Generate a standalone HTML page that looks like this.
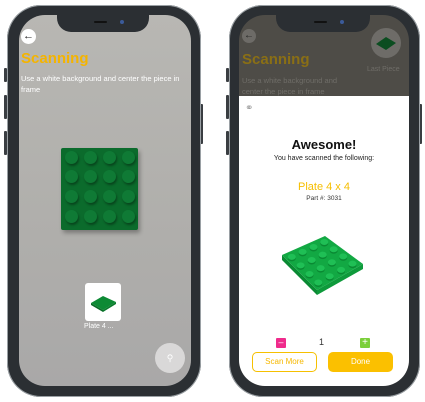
<!DOCTYPE html>
<html><head><style>
*{margin:0;padding:0;box-sizing:border-box}
body{width:425px;height:402px;background:#fff;position:relative;overflow:hidden;font-family:"Liberation Sans",sans-serif}
.ph{position:absolute;background:#2b2f33;border-radius:34px;box-shadow:0 0 0 1px #9aa0a4 inset}
.scr{position:absolute;border-radius:26px;overflow:hidden}
.notch{position:absolute;background:#2b2f33;border-radius:0 0 14px 14px}
.btn{position:absolute;background:#3a3e42;width:3px;border-radius:1px}
.stud{position:absolute;width:13px;height:13px;border-radius:50%;background:#0f7a35;box-shadow:1px 2px 2px rgba(0,0,0,.35)}
.a{position:absolute}
</style></head><body>
<!-- left phone -->
<div class="btn" style="left:4px;top:68px;height:14px"></div>
<div class="btn" style="left:4px;top:95px;height:24px"></div>
<div class="btn" style="left:4px;top:131px;height:24px"></div>
<div class="btn" style="left:200px;top:104px;height:40px"></div>
<div class="ph" style="left:7px;top:5px;width:194px;height:392px"></div>
<div class="scr" style="left:19px;top:15px;width:172px;height:371px;background:linear-gradient(#b8b7b3,#afaeab 60%,#a9a8a8)">
  <div class="a" style="left:2px;top:14px;width:15px;height:15px;border-radius:50%;background:#fff;font-size:11px;line-height:15px;text-align:center;color:#222">&#8592;</div>
  <div class="a" style="left:2px;top:35px;font-size:15px;font-weight:bold;color:#f4b400">Scanning</div>
  <div class="a" style="left:2px;top:58px;width:160px;font-size:7.5px;line-height:11px;color:#fff">Use a white background and center the piece in frame</div>
  <div class="a" style="left:42px;top:133px;width:77px;height:82px;background:#0b6b2c;border-radius:2px;box-shadow:2px 3px 4px rgba(0,0,0,.3)">
    <div class="stud" style="left:4px;top:3px"></div><div class="stud" style="left:23px;top:3px"></div><div class="stud" style="left:42px;top:3px"></div><div class="stud" style="left:61px;top:3px"></div>
    <div class="stud" style="left:4px;top:22px"></div><div class="stud" style="left:23px;top:22px"></div><div class="stud" style="left:42px;top:22px"></div><div class="stud" style="left:61px;top:22px"></div>
    <div class="stud" style="left:4px;top:42px"></div><div class="stud" style="left:23px;top:42px"></div><div class="stud" style="left:42px;top:42px"></div><div class="stud" style="left:61px;top:42px"></div>
    <div class="stud" style="left:4px;top:62px"></div><div class="stud" style="left:23px;top:62px"></div><div class="stud" style="left:42px;top:62px"></div><div class="stud" style="left:61px;top:62px"></div>
  </div>
  <div class="a" style="left:66px;top:268px;width:36px;height:38px;background:#fff;border-radius:3px">
    <svg width="36" height="38"><polygon points="6,20 18,13 31,19 18,27" fill="#0d8a34"/><polygon points="6,20 18,27 18,29 6,22" fill="#096b26"/><polygon points="18,27 31,19 31,21 18,29" fill="#0a7a2c"/></svg>
  </div>
  <div class="a" style="left:65px;top:308px;font-size:7px;color:#fff">Plate 4 ...</div>
  <div class="a" style="left:136px;top:328px;width:30px;height:30px;border-radius:50%;background:#d9d8d8;color:#fff;font-size:9px;text-align:center;line-height:30px">&#9906;</div>
</div>
<div class="notch" style="left:57px;top:15px;width:92px;height:17px"></div>
<div class="a" style="left:94px;top:21px;width:13px;height:2px;background:#111;border-radius:1px"></div>
<div class="a" style="left:120px;top:20px;width:4px;height:4px;background:#3b5b9a;border-radius:50%"></div>

<!-- right phone -->
<div class="btn" style="left:226px;top:68px;height:14px"></div>
<div class="btn" style="left:226px;top:95px;height:24px"></div>
<div class="btn" style="left:226px;top:131px;height:24px"></div>
<div class="btn" style="left:419px;top:104px;height:40px"></div>
<div class="ph" style="left:229px;top:5px;width:191px;height:392px"></div>
<div class="scr" style="left:239px;top:15px;width:170px;height:371px;background:#4e4c47">
  <div class="a" style="left:3px;top:14px;width:14px;height:14px;border-radius:50%;background:#6d6b67;font-size:10px;line-height:14px;text-align:center;color:#222">&#8592;</div>
  <div class="a" style="left:3px;top:36px;font-size:15px;font-weight:bold;color:#8a6f15">Scanning</div>
  <div class="a" style="left:3px;top:60px;width:110px;font-size:7.5px;line-height:11px;color:#6f6d68">Use a white background and center the piece in frame</div>
  <div class="a" style="left:132px;top:13px;width:30px;height:30px;border-radius:50%;background:#6e6c68">
    <svg width="30" height="30"><polygon points="5,16 15,9 25,15 15,22" fill="#0b4d20"/></svg>
  </div>
  <div class="a" style="left:128px;top:51px;font-size:7px;color:#6f6d68">Last Piece</div>
  <div class="a" style="left:0;top:81px;width:170px;height:300px;background:#fff">
    <div class="a" style="left:6px;top:7px;font-size:10px;color:#999">&#9901;</div>
    <div class="a" style="left:0;top:41px;width:170px;text-align:center;font-size:13px;font-weight:bold;color:#111">Awesome!</div>
    <div class="a" style="left:0;top:59px;width:170px;text-align:center;font-size:7px;color:#222">You have scanned the following:</div>
    <div class="a" style="left:0;top:85px;width:170px;text-align:center;font-size:11px;color:#f6be00">Plate 4 x 4</div>
    <div class="a" style="left:0;top:99px;width:170px;text-align:center;font-size:6.5px;color:#333">Part #: 3031</div>
    <svg class="a" style="left:35px;top:135px" width="95" height="68">
      <polygon points="8,24 43,59 43,64 8,29" fill="#0a8a33"/>
      <polygon points="43,59 89,33 89,38 43,64" fill="#0e9a3b"/>
      <polygon points="8,24 51,5 89,33 43,59" fill="#12a843"/>
      <g fill="#0a8a33">
        <ellipse cx="17.8" cy="27.4" rx="4" ry="3"/><ellipse cx="28.6" cy="22.4" rx="4" ry="3"/><ellipse cx="39.5" cy="17.5" rx="4" ry="3"/><ellipse cx="50.3" cy="12.5" rx="4" ry="3"/>
        <ellipse cx="26.6" cy="35.9" rx="4" ry="3"/><ellipse cx="37.7" cy="30.5" rx="4" ry="3"/><ellipse cx="48.7" cy="25.1" rx="4" ry="3"/><ellipse cx="59.7" cy="19.7" rx="4" ry="3"/>
        <ellipse cx="35.5" cy="44.5" rx="4" ry="3"/><ellipse cx="46.7" cy="38.6" rx="4" ry="3"/><ellipse cx="57.9" cy="32.8" rx="4" ry="3"/><ellipse cx="69.2" cy="26.9" rx="4" ry="3"/>
        <ellipse cx="44.3" cy="53" rx="4" ry="3"/><ellipse cx="55.7" cy="46.7" rx="4" ry="3"/><ellipse cx="67.1" cy="40.4" rx="4" ry="3"/><ellipse cx="78.5" cy="34.1" rx="4" ry="3"/>
      </g>
      <g fill="#1fbf55">
        <ellipse cx="17.8" cy="25.9" rx="4" ry="3"/><ellipse cx="28.6" cy="20.9" rx="4" ry="3"/><ellipse cx="39.5" cy="16" rx="4" ry="3"/><ellipse cx="50.3" cy="11" rx="4" ry="3"/>
        <ellipse cx="26.6" cy="34.4" rx="4" ry="3"/><ellipse cx="37.7" cy="29" rx="4" ry="3"/><ellipse cx="48.7" cy="23.6" rx="4" ry="3"/><ellipse cx="59.7" cy="18.2" rx="4" ry="3"/>
        <ellipse cx="35.5" cy="43" rx="4" ry="3"/><ellipse cx="46.7" cy="37.1" rx="4" ry="3"/><ellipse cx="57.9" cy="31.3" rx="4" ry="3"/><ellipse cx="69.2" cy="25.4" rx="4" ry="3"/>
        <ellipse cx="44.3" cy="51.5" rx="4" ry="3"/><ellipse cx="55.7" cy="45.2" rx="4" ry="3"/><ellipse cx="67.1" cy="38.9" rx="4" ry="3"/><ellipse cx="78.5" cy="32.6" rx="4" ry="3"/>
      </g>
    </svg>
    <div class="a" style="left:37px;top:242px;width:10px;height:10px;background:#ef2b8c;border-radius:1px;color:#fff;font-size:9px;line-height:9px;text-align:center">&#8211;</div>
    <div class="a" style="left:80px;top:241px;font-size:9px;color:#333">1</div>
    <div class="a" style="left:121px;top:242px;width:10px;height:10px;background:#7bcf3a;border-radius:1px;color:#fff;font-size:10px;line-height:10px;text-align:center">+</div>
    <div class="a" style="left:13px;top:256px;width:65px;height:20px;border:1.5px solid #f6c000;border-radius:5px;text-align:center;font-size:8px;line-height:17px;color:#f6b800">Scan More</div>
    <div class="a" style="left:89px;top:256px;width:65px;height:20px;background:#fbc000;border-radius:5px;text-align:center;font-size:8px;line-height:20px;color:#fff">Done</div>
  </div>
</div>
<div class="notch" style="left:276px;top:15px;width:94px;height:17px;background:#2b2f33"></div>
<div class="a" style="left:314px;top:21px;width:13px;height:2px;background:#111;border-radius:1px"></div>
<div class="a" style="left:340px;top:20px;width:4px;height:4px;background:#3b5b9a;border-radius:50%"></div>
</body></html>
